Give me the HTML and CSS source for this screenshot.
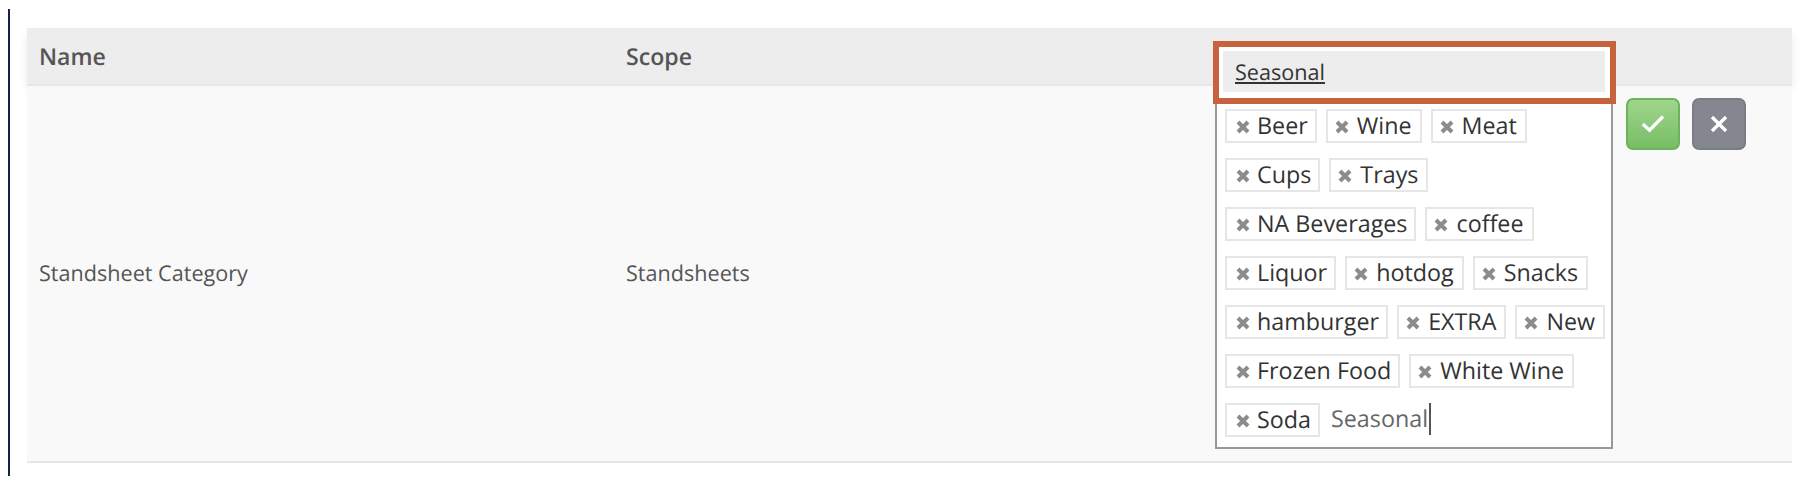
FILE: index.html
```html
<!DOCTYPE html>
<html lang="en">
<head>
    <meta charset="UTF-8">
    <meta name="viewport" content="width=device-width, initial-scale=1.0">
    <title>Categories</title>
    <link rel="stylesheet" href="styles.css">
</head>
<body>
    <svg class="sprite">
        <symbol id="times" viewBox="0 0 14 14">
            <path d="M2 2 L12 12 M12 2 L2 12"/>
        </symbol>
    </svg>

    <div class="panel">
        <div class="table">
            <div class="table-header">
                <div class="col-name">Name</div>
                <div class="col-scope">Scope</div>
            </div>
            <div class="table-row">
                <div class="col-name">Standsheet Category</div>
                <div class="col-scope">Standsheets</div>
                <div class="col-values">
                    <div class="tag-select">
                        <div class="tag-row">
                            <span class="tag"><svg class="remove"><use href="#times"/></svg>Beer</span>
                            <span class="tag"><svg class="remove"><use href="#times"/></svg>Wine</span>
                            <span class="tag"><svg class="remove"><use href="#times"/></svg>Meat</span>
                        </div>
                        <div class="tag-row">
                            <span class="tag"><svg class="remove"><use href="#times"/></svg>Cups</span>
                            <span class="tag"><svg class="remove"><use href="#times"/></svg>Trays</span>
                        </div>
                        <div class="tag-row">
                            <span class="tag"><svg class="remove"><use href="#times"/></svg>NA Beverages</span>
                            <span class="tag"><svg class="remove"><use href="#times"/></svg>coffee</span>
                        </div>
                        <div class="tag-row">
                            <span class="tag"><svg class="remove"><use href="#times"/></svg>Liquor</span>
                            <span class="tag"><svg class="remove"><use href="#times"/></svg>hotdog</span>
                            <span class="tag"><svg class="remove"><use href="#times"/></svg>Snacks</span>
                        </div>
                        <div class="tag-row">
                            <span class="tag"><svg class="remove"><use href="#times"/></svg>hamburger</span>
                            <span class="tag"><svg class="remove"><use href="#times"/></svg>EXTRA</span>
                            <span class="tag"><svg class="remove"><use href="#times"/></svg>New</span>
                        </div>
                        <div class="tag-row">
                            <span class="tag"><svg class="remove"><use href="#times"/></svg>Frozen Food</span>
                            <span class="tag"><svg class="remove"><use href="#times"/></svg>White Wine</span>
                        </div>
                        <div class="tag-row">
                            <span class="tag"><svg class="remove"><use href="#times"/></svg>Soda</span>
                            <span class="tag-input">Seasonal</span>
                        </div>
                    </div>
                    <div class="dropdown">
                        <div class="option"><span class="match">Seasonal</span></div>
                    </div>
                </div>
                <div class="col-actions">
                    <button class="btn btn-save" aria-label="Save">
                        <svg width="24" height="20" viewBox="0 0 24 20"><path d="M1.8 10 L8.5 16.2 L22 2.5"/></svg>
                    </button>
                    <button class="btn btn-cancel" aria-label="Cancel">
                        <svg width="18" height="18" viewBox="0 0 18 18"><path d="M2 2 L16 16 M16 2 L2 16"/></svg>
                    </button>
                </div>
            </div>
        </div>
    </div>
</body>
</html>
```
FILE: styles.css
```css
* {
    box-sizing: border-box;
}

body {
    margin: 0;
    padding: 9px 12px 4px 8px;
    height: 480px;
    background-color: #fff;
    color: #555;
    font-family: "Open Sans", "Noto Sans", sans-serif;
    font-size: 21.6px;
    text-rendering: geometricPrecision;
}

.sprite {
    display: none;
}

.panel {
    height: 467px;
    border-left: 2px solid #14234a;
    padding: 19px 0 0 17px;
}

.table-header {
    display: flex;
    align-items: center;
    height: 58px;
    padding-left: 12px;
    background-color: #ededed;
    border-bottom: 2px solid #e7e7e7;
    box-shadow: 0 4px 10px -2px rgba(0, 0, 0, 0.12);
    font-size: 23.1px;
    font-weight: 600;
}

.table-row {
    position: relative;
    display: flex;
    align-items: center;
    height: 377px;
    padding-left: 12px;
    background-color: #f9f9f9;
    border-bottom: 2px solid #e6e6e6;
}

.col-name {
    width: 587px;
}

.col-scope {
    width: 589px;
}

.col-values {
    position: relative;
    width: 398px;
}

.col-actions {
    display: flex;
    align-self: flex-start;
    gap: 12px;
    padding: 12px 0 0 12.5px;
}

/* Tag select */
.tag-select {
    display: flex;
    flex-direction: column;
    gap: 15px;
    height: 351px;
    padding: 9px 0 0 8px;
    background-color: #fff;
    border: 2px solid #999;
    color: #333;
    font-size: 23.3px;
}

.tag-row {
    display: flex;
    gap: 9px;
    height: 34px;
}

.tag {
    display: flex;
    align-items: center;
    height: 34px;
    padding: 0 8px 2px 7px;
    border: 2px solid #e6e6e6;
    line-height: 30px;
    white-space: nowrap;
}

.tag:first-child {
    padding: 0 7px 2px 9px;
}

.remove {
    width: 14px;
    height: 14px;
    margin: 4px 8px 0 0;
    stroke: #8c8c8c;
    stroke-width: 4;
}

.tag:first-child .remove {
    margin-right: 7px;
}

.tag-input {
    height: 32px;
    margin-left: 2px;
    padding-right: 1px;
    border-right: 2px solid #555;
    color: #666;
    line-height: 31px;
}

/* Suggestions list, shown over the select */
.dropdown {
    position: absolute;
    top: -57px;
    left: -2px;
    width: 403px;
    height: 63px;
    padding: 4px 5px 0 4px;
    background-color: #fff;
    border: 6px solid #c6623e;
}

.option {
    height: 41px;
    padding-left: 12px;
    background-color: #ededed;
    color: #333;
    font-size: 21.6px;
    line-height: 43px;
}

.match {
    text-decoration: underline;
}

/* Buttons */
.btn {
    display: flex;
    align-items: center;
    justify-content: center;
    width: 54px;
    height: 52px;
    padding: 0;
    border-radius: 7px;
}

.btn svg {
    fill: none;
    stroke: #fff;
    stroke-width: 3.3;
}

.btn-save {
    background: linear-gradient(#9fd68c, #78bd65);
    border: 2px solid #6db35b;
}

.btn-cancel {
    background-color: #848790;
    border: 2px solid #7a7d85;
}
```
